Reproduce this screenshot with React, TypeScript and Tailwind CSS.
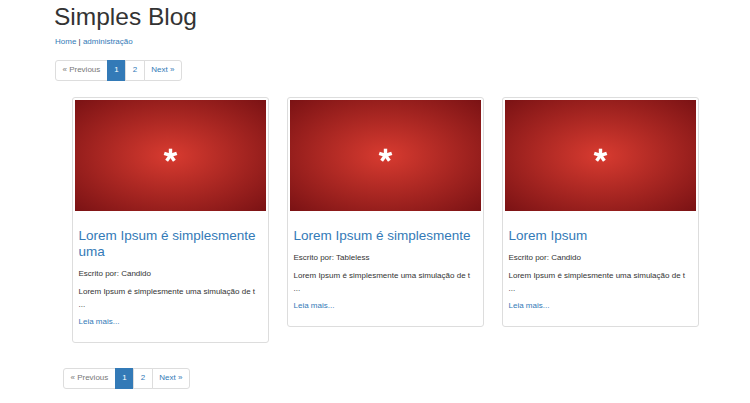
import React from "react";

const posts = [
  { title: "Lorem Ipsum é simplesmente uma", author: "Candido" },
  { title: "Lorem Ipsum é simplesmente", author: "Tableless" },
  { title: "Lorem Ipsum", author: "Candido" },
];

function Asterisk() {
  // five-armed asterisk, drawn around the centre (7,7)
  const arms = [-90, -18, 54, 126, 198];
  return (
    <svg width="15" height="14" viewBox="0 0 14 14" className="block">
      {arms.map((a) => {
        const r = (a * Math.PI) / 180;
        return (
          <line
            key={a}
            x1={7}
            y1={7.3}
            x2={7 + Math.cos(r) * 6.6}
            y2={7.3 + Math.sin(r) * 6.6}
            stroke="#fff"
            strokeWidth={3.4}
          />
        );
      })}
    </svg>
  );
}

function Pagination({ className = "" }: { className?: string }) {
  return (
    <ul className={`flex text-[8px] leading-[12px] ${className}`}>
      <li className="h-[21px] flex items-center px-[6.5px] border border-[#ddd] rounded-l-[3px] text-[#777] bg-white">
        « Previous
      </li>
      <li className="h-[21px] flex items-center px-[6.5px] -ml-px border border-[#337ab7] bg-[#337ab7] text-white">
        1
      </li>
      <li className="h-[21px] flex items-center px-[6.5px] -ml-px border border-[#ddd] text-[#337ab7] bg-white">
        2
      </li>
      <li className="h-[21px] flex items-center px-[6.5px] -ml-px border border-[#ddd] rounded-r-[3px] text-[#337ab7] bg-white">
        Next »
      </li>
    </ul>
  );
}

export default function App() {
  return (
    <div className="min-h-screen bg-white font-['Liberation_Sans',Arial,sans-serif] text-[#333] pl-[54px] pt-[3px]">
      <h1 className="text-[24.5px] leading-[27px]">Simples Blog</h1>
      <div className="mt-[5.7px] text-[8px] leading-[12px] ml-px">
        <a className="text-[#337ab7]">Home</a> <span className="text-[#333]">|</span>{" "}
        <a className="text-[#337ab7]">administração</a>
      </div>

      <Pagination className="mt-[12.3px] ml-px" />

      {/* Posts */}
      <div className="flex items-start gap-[18px] mt-[16px] ml-[18px]">
        {posts.map((post) => (
          <div key={post.title} className="w-[197px] border border-[#ddd] rounded-[3px] p-[2px] bg-white">
            <div className="h-[111px] flex items-center justify-center bg-[radial-gradient(ellipse_at_center,#d83b30_0%,#7a1214_100%)]">
              <Asterisk />
            </div>
            <div className="px-[3.5px] pt-[17px] pb-[11.8px]">
              <h3 className="text-[13.5px] leading-[16px] text-[#337ab7]">{post.title}</h3>
              <p className="mt-[8px] text-[8px] leading-[12px]">Escrito por: {post.author}</p>
              <p className="mt-[5.5px] text-[8px] leading-[13px]">
                Lorem Ipsum é simplesmente uma simulação de t
                <br />
                ...
              </p>
              <a className="block mt-[4.5px] text-[8px] leading-[12px] text-[#337ab7]">Leia mais...</a>
            </div>
          </div>
        ))}
      </div>

      <Pagination className="mt-[25px] ml-[9px]" />
    </div>
  );
}
